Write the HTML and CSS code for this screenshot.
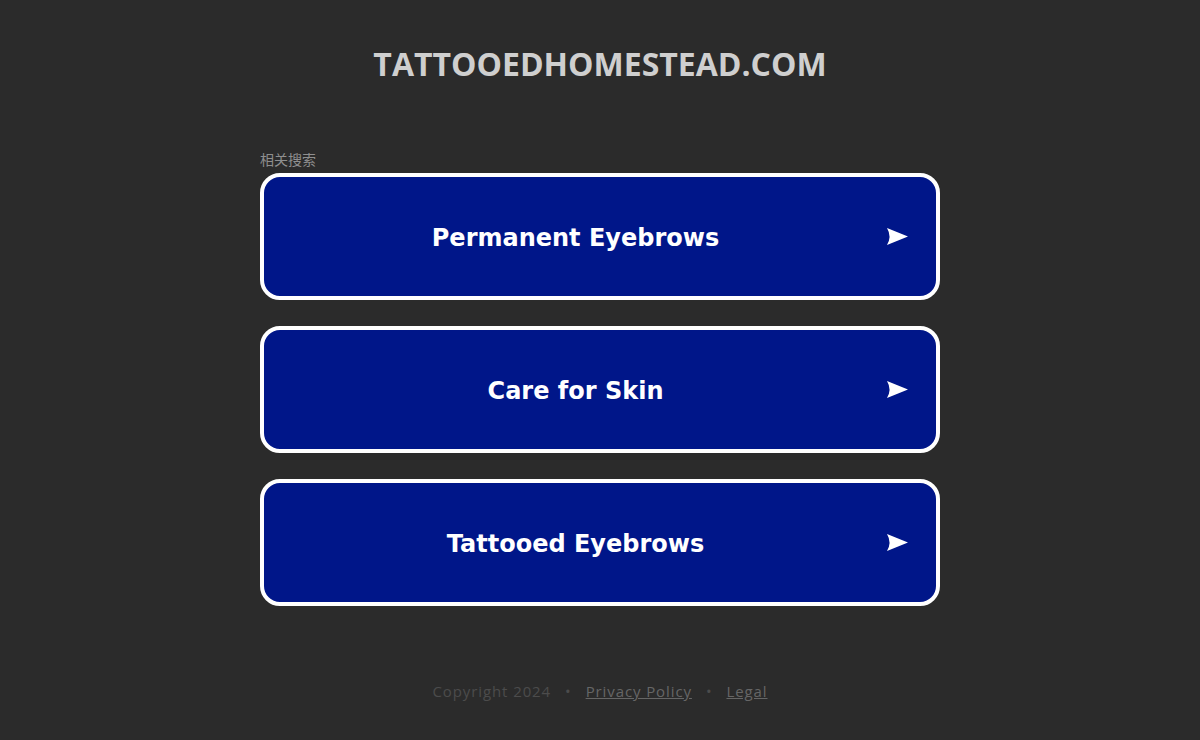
FILE: index.html
```html
<!DOCTYPE html>
<html lang="en">
<head>
<meta charset="utf-8">
<title>tattooedhomestead.com</title>
<link rel="stylesheet" href="styles.css">
</head>
<body>
<div class="page">
  <header class="header">
    <h1 class="domain">TATTOOEDHOMESTEAD.COM</h1>
  </header>
  <main class="main">
    <div class="label">相关搜索</div>
    <ul class="links">
      <li><a class="link" href="#"><span class="link-text">Permanent Eyebrows</span><svg class="arrow" width="21" height="17" viewBox="0 0 21 17"><path d="M0 0 L21 8.5 L0 17 Q5 8.5 0 0 Z" fill="#fff"/></svg></a></li>
      <li><a class="link" href="#"><span class="link-text">Care for Skin</span><svg class="arrow" width="21" height="17" viewBox="0 0 21 17"><path d="M0 0 L21 8.5 L0 17 Q5 8.5 0 0 Z" fill="#fff"/></svg></a></li>
      <li><a class="link" href="#"><span class="link-text">Tattooed Eyebrows</span><svg class="arrow" width="21" height="17" viewBox="0 0 21 17"><path d="M0 0 L21 8.5 L0 17 Q5 8.5 0 0 Z" fill="#fff"/></svg></a></li>
    </ul>
  </main>
  <footer class="footer">
    <span class="copy">Copyright 2024</span>
    <span class="dot">•</span>
    <a class="foot-link" href="#">Privacy Policy</a>
    <span class="dot">•</span>
    <a class="foot-link" href="#">Legal</a>
  </footer>
</div>
</body>
</html>
```

FILE: styles.css
```css
html, body {
  margin: 0;
  padding: 0;
  background: #2b2b2b;
}
body {
  width: 1200px;
  height: 740px;
  overflow: hidden;
}
.page {
  display: flex;
  flex-direction: column;
  align-items: center;
}
.header {
  padding-top: 44px;
  height: 150px;
  box-sizing: border-box;
}
.domain {
  margin: 0;
  font-family: "Open Sans", "Liberation Sans", sans-serif;
  font-weight: 700;
  font-size: 32px;
  line-height: 40px;
  color: #cfcfcf;
}
.main {
  width: 680px;
}
.label {
  font-family: "Noto Sans CJK SC", "Liberation Sans", sans-serif;
  font-size: 14px;
  line-height: 18px;
  color: #8f8f8f;
  height: 23px;
}
.links {
  list-style: none;
  margin: 0;
  padding: 0;
  display: flex;
  flex-direction: column;
  gap: 26px;
}
.link {
  display: flex;
  align-items: center;
  height: 127px;
  box-sizing: border-box;
  border: 4px solid #ffffff;
  border-radius: 20px;
  background: #001689;
  text-decoration: none;
  padding-right: 28px;
}
.link-text {
  flex: 1;
  text-align: center;
  font-family: "DejaVu Sans", Verdana, sans-serif;
  font-weight: 700;
  font-size: 24px;
  line-height: 30px;
  padding-top: 2px;
  color: #ffffff;
}
.arrow {
  display: block;
  flex: none;
}
.footer {
  margin-top: 75px;
  display: flex;
  gap: 14px;
  font-family: "Open Sans", "Liberation Sans", sans-serif;
  font-size: 15px;
  letter-spacing: 0.9px;
  line-height: 20px;
}
.copy {
  color: #4c4c4c;
}
.dot {
  color: #4c4c4c;
}
.foot-link {
  color: #666666;
  text-decoration: underline;
}
```
